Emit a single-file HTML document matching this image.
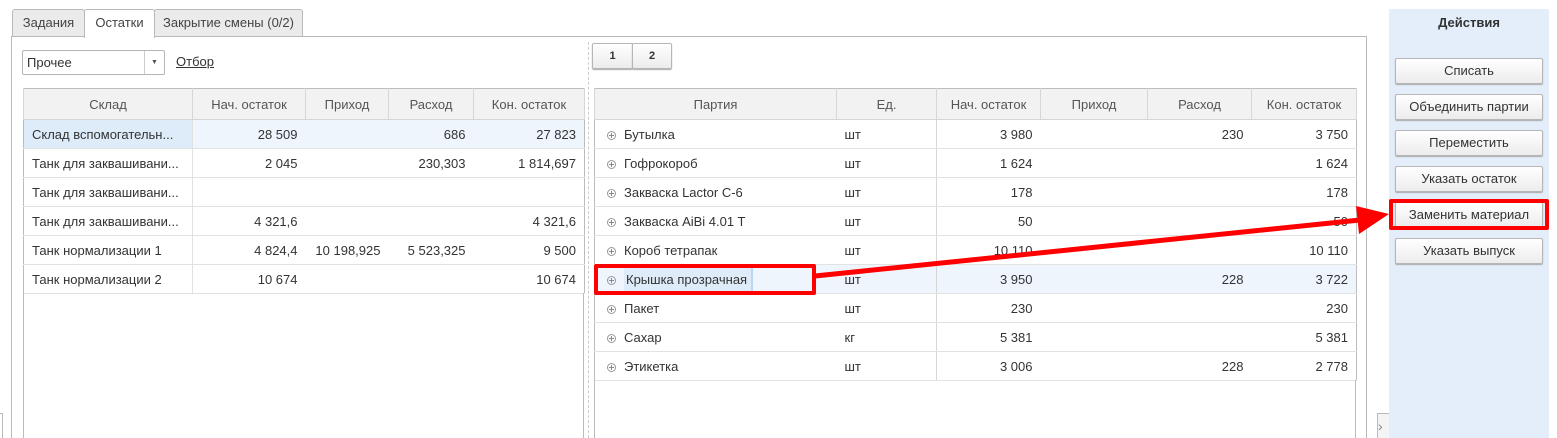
<!DOCTYPE html>
<html style="overflow:hidden"><head><meta charset="utf-8"><style>
*{box-sizing:border-box;margin:0;padding:0}
html,body{width:1557px;height:438px;overflow:hidden}
body{background:#fff;position:relative;font-family:"Liberation Sans",Arial,sans-serif;font-size:13px;color:#333}
.a{position:absolute}
.tab{position:absolute;top:9px;height:28px;border:1px solid #b9b9b9;border-bottom:none;background:#ebebeb;line-height:26px;text-align:center;border-radius:3px 3px 0 0;color:#444}
table{border-collapse:collapse;position:absolute;table-layout:fixed}
th{height:31px;background:#f2f2f2;font-weight:normal;color:#555;border:1px solid #d6d6d6;border-top:none;text-align:center}
td{height:29px;border-bottom:1px solid #e2e2e2;padding:0 8px;white-space:nowrap;overflow:hidden}
.r{text-align:right}
.sel td{background:#eef5fc}
.p td:first-child{padding-left:12px}
.btn{position:absolute;left:1395px;width:148px;height:26px;border:1px solid #b6b6b6;border-radius:2px;background:linear-gradient(#fff,#ececec);text-align:center;line-height:24px;color:#333;box-shadow:0 1px 1px #aaa}
.pl{display:inline-block;width:9px;height:9px;border:1px solid #999;border-radius:50%;position:relative;margin-right:8px;vertical-align:-1px}
.pl:before{content:"";position:absolute;left:1px;top:3px;width:5px;height:1px;background:#888}
.pl:after{content:"";position:absolute;left:3px;top:1px;width:1px;height:5px;background:#888}
</style></head><body>
<div class="tab" style="left:12px;width:73px">Задания</div>
<div class="tab" style="left:84px;width:71px;background:#fff;height:29px;z-index:2">Остатки</div>
<div class="tab" style="left:154px;width:149px">Закрытие смены (0/2)</div>
<div class="a" style="left:11px;top:36px;width:1356px;height:402px;border:1px solid #b9b9b9;border-bottom:none"></div>

<div class="a" style="left:22px;top:50px;width:143px;height:25px;border:1px solid #b5b5b5;border-radius:2px;line-height:23px;padding-left:4px">Прочее<span class="a" style="left:121px;top:0;width:1px;height:23px;background:#ccc"></span><span class="a" style="left:128px;top:0;font-size:7px;color:#555">▼</span></div>
<div class="a" style="left:176px;top:54px;text-decoration:underline;color:#333">Отбор</div>

<div class="a" style="left:588px;top:42px;height:396px;border-left:1px dashed #ccc"></div>

<table style="left:23px;top:88px;width:561px;border:1px solid #bcbcbc">
<colgroup><col style="width:169px"><col style="width:113px"><col style="width:83px"><col style="width:85px"><col style="width:111px"></colgroup>
<tr><th>Склад</th><th>Нач. остаток</th><th>Приход</th><th>Расход</th><th>Кон. остаток</th></tr>
<tr class="sel"><td style="background:#deecfa;border-right:1px solid #e2e2e2">Склад вспомогательн...</td><td class="r">28 509</td><td></td><td class="r">686</td><td class="r">27 823</td></tr>
<tr><td style="border-right:1px solid #e2e2e2">Танк для заквашивани...</td><td class="r">2 045</td><td></td><td class="r">230,303</td><td class="r">1 814,697</td></tr>
<tr><td style="border-right:1px solid #e2e2e2">Танк для заквашивани...</td><td></td><td></td><td></td><td></td></tr>
<tr><td style="border-right:1px solid #e2e2e2">Танк для заквашивани...</td><td class="r">4 321,6</td><td></td><td></td><td class="r">4 321,6</td></tr>
<tr><td style="border-right:1px solid #e2e2e2">Танк нормализации 1</td><td class="r">4 824,4</td><td class="r">10 198,925</td><td class="r">5 523,325</td><td class="r">9 500</td></tr>
<tr><td style="border-right:1px solid #e2e2e2">Танк нормализации 2</td><td class="r">10 674</td><td></td><td></td><td class="r">10 674</td></tr>
</table>
<div class="a" style="left:23px;top:293px;width:561px;height:145px;border-left:1px solid #bcbcbc;border-right:1px solid #bcbcbc"></div>

<div class="a" style="left:592px;top:43px;width:41px;height:26px;border:1px solid #b6b6b6;border-radius:2px;background:linear-gradient(#fff,#ececec);text-align:center;line-height:24px;font-size:11px;font-weight:bold;box-shadow:0 1px 1px #aaa">1</div>
<div class="a" style="left:632px;top:43px;width:40px;height:26px;border:1px solid #b6b6b6;border-radius:2px;background:linear-gradient(#fff,#ececec);text-align:center;line-height:24px;font-size:11px;font-weight:bold;box-shadow:0 1px 1px #aaa">2</div>

<table class="p" style="left:594px;top:88px;width:762px;border:1px solid #bcbcbc">
<colgroup><col style="width:242px"><col style="width:100px"><col style="width:104px"><col style="width:107px"><col style="width:104px"><col style="width:105px"></colgroup>
<tr><th>Партия</th><th>Ед.</th><th>Нач. остаток</th><th>Приход</th><th>Расход</th><th>Кон. остаток</th></tr>
<tr><td><span class="pl"></span>Бутылка</td><td>шт</td><td class="r" style="border-left:1px solid #d6d6d6">3 980</td><td></td><td class="r">230</td><td class="r">3 750</td></tr>
<tr><td><span class="pl"></span>Гофрокороб</td><td>шт</td><td class="r" style="border-left:1px solid #d6d6d6">1 624</td><td></td><td></td><td class="r">1 624</td></tr>
<tr><td><span class="pl"></span>Закваска Lactor C-6</td><td>шт</td><td class="r" style="border-left:1px solid #d6d6d6">178</td><td></td><td></td><td class="r">178</td></tr>
<tr><td><span class="pl"></span>Закваска AiBi 4.01 T</td><td>шт</td><td class="r" style="border-left:1px solid #d6d6d6">50</td><td></td><td></td><td class="r">50</td></tr>
<tr><td><span class="pl"></span>Короб тетрапак</td><td>шт</td><td class="r" style="border-left:1px solid #d6d6d6">10 110</td><td></td><td></td><td class="r">10 110</td></tr>
<tr class="sel"><td><span class="pl"></span><span style="background:#deecfa;padding:5px 4px 5px 2px;border-right:2px solid #bcd6f2">Крышка прозрачная</span></td><td>шт</td><td class="r" style="border-left:1px solid #d6d6d6">3 950</td><td></td><td class="r">228</td><td class="r">3 722</td></tr>
<tr><td><span class="pl"></span>Пакет</td><td>шт</td><td class="r" style="border-left:1px solid #d6d6d6">230</td><td></td><td></td><td class="r">230</td></tr>
<tr><td><span class="pl"></span>Сахар</td><td>кг</td><td class="r" style="border-left:1px solid #d6d6d6">5 381</td><td></td><td></td><td class="r">5 381</td></tr>
<tr><td><span class="pl"></span>Этикетка</td><td>шт</td><td class="r" style="border-left:1px solid #d6d6d6">3 006</td><td></td><td class="r">228</td><td class="r">2 778</td></tr>
</table>
<div class="a" style="left:594px;top:380px;width:762px;height:58px;border-left:1px solid #bcbcbc;border-right:1px solid #bcbcbc"></div>

<div class="a" style="left:1389px;top:9px;width:160px;height:429px;background:#e3eefa"></div>
<div class="a" style="left:1389px;top:15px;width:160px;text-align:center;font-weight:bold">Действия</div>
<div class="btn" style="top:58px">Списать</div>
<div class="btn" style="top:94px">Объединить партии</div>
<div class="btn" style="top:130px">Переместить</div>
<div class="btn" style="top:166px">Указать остаток</div>
<div class="btn" style="top:202px">Заменить материал</div>
<div class="btn" style="top:238px">Указать выпуск</div>
<div class="a" style="left:1377px;top:413px;width:12px;height:25px;border:1px solid #bbb;border-right:none;border-bottom:none;background:#f4f4f4;color:#888;font-size:14px;line-height:24px">›</div>
<div class="a" style="left:0;top:413px;width:3px;height:25px;border:1px solid #bbb;border-left:none;border-bottom:none"></div>

<div class="a" style="left:1389px;top:199px;width:160px;height:31px;border:4px solid #f00;border-radius:2px"></div>
<div class="a" style="left:594px;top:264px;width:222px;height:31px;border:4px solid #f00;border-radius:2px"></div>
<svg class="a" style="left:0;top:0" width="1557" height="438"><line x1="815" y1="276" x2="1360" y2="220" stroke="#f00" stroke-width="5"/><polygon points="1389,214 1356,206 1359,234" fill="#f00"/></svg>
</body></html>
